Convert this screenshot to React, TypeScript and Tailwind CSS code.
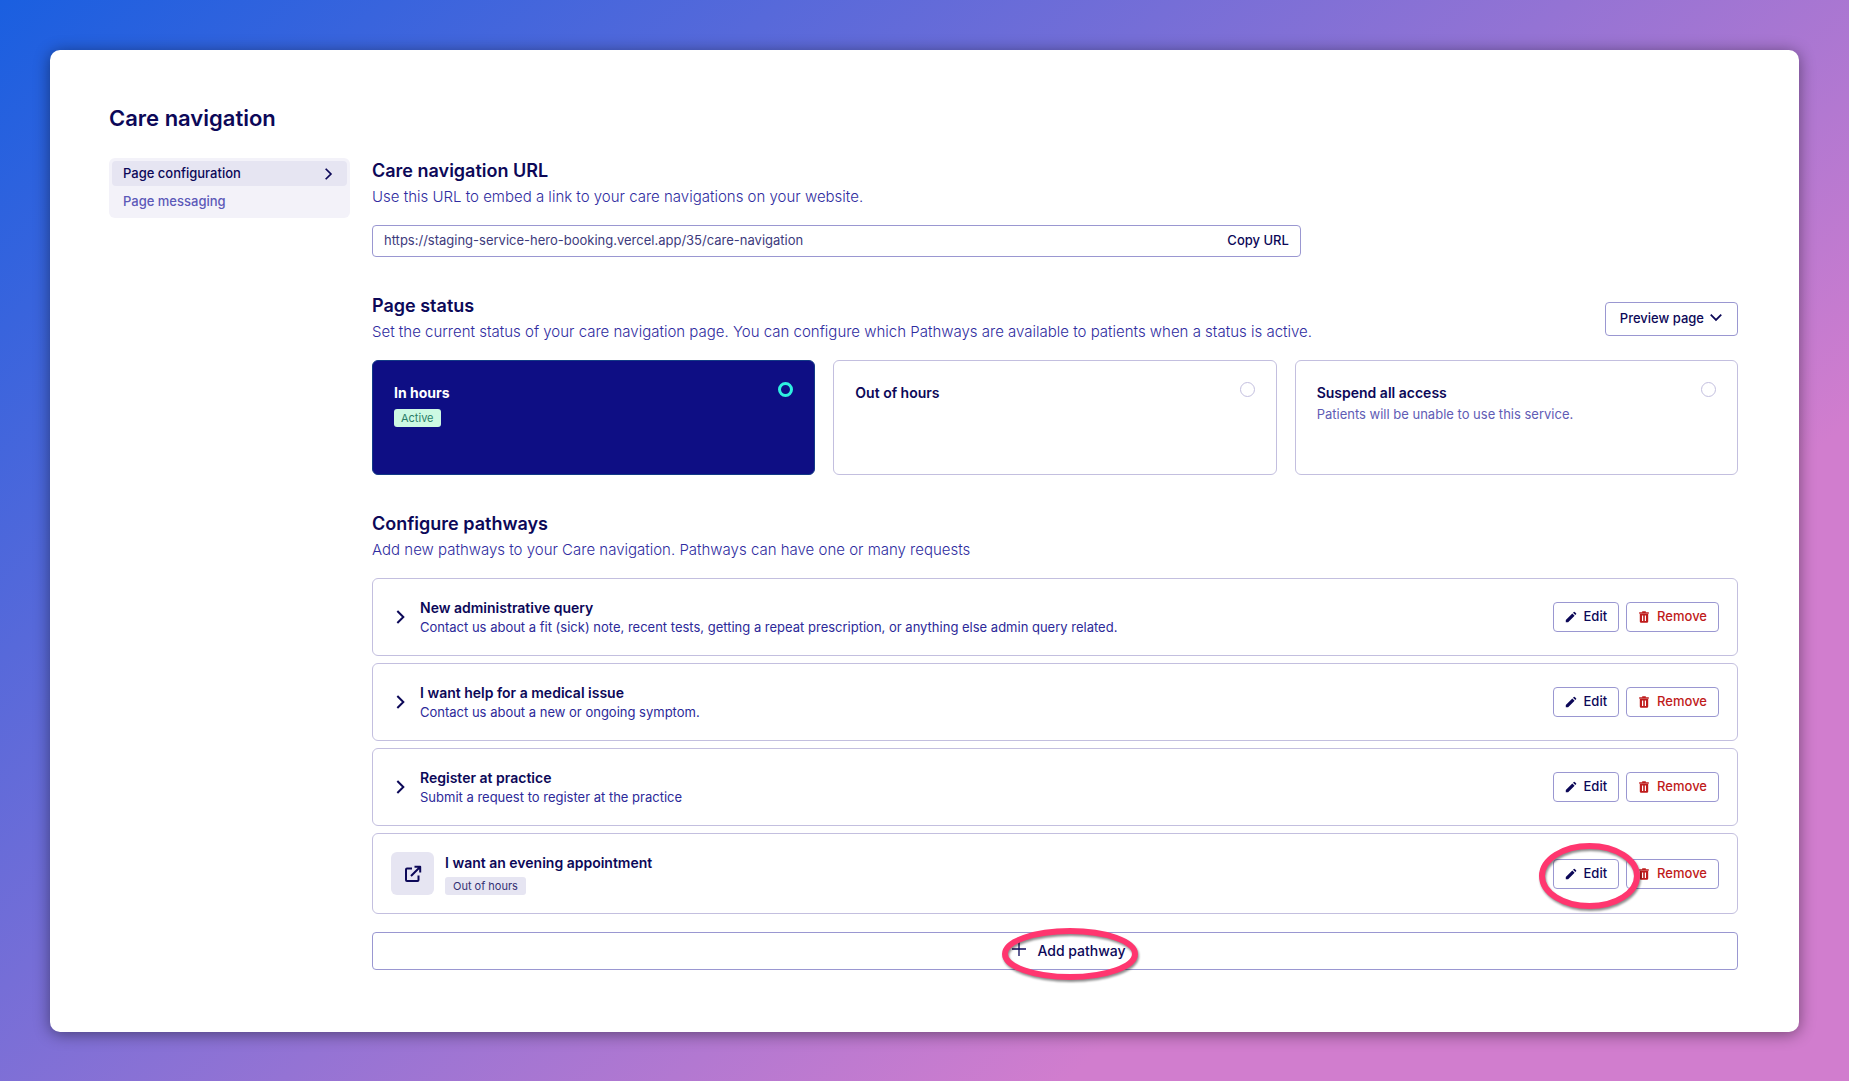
import { useState } from "react";
import type { ReactNode } from "react";
import clsx from "clsx";

type Pathway = {
  title: string;
  description?: string;
  tag?: string;
};

const STATUSES = [
  { key: "in", title: "In hours", note: "" },
  { key: "out", title: "Out of hours", note: "" },
  { key: "suspend", title: "Suspend all access", note: "Patients will be unable to use this service." },
];

const PATHWAYS: Pathway[] = [
  {
    title: "New administrative query",
    description:
      "Contact us about a fit (sick) note, recent tests, getting a repeat prescription, or anything else admin query related.",
  },
  { title: "I want help for a medical issue", description: "Contact us about a new or ongoing symptom." },
  { title: "Register at practice", description: "Submit a request to register at the practice" },
  { title: "I want an evening appointment", tag: "Out of hours" },
];

export default function App() {
  const [status, setStatus] = useState("in");
  const [url, setUrl] = useState("https://staging-service-hero-booking.vercel.app/35/care-navigation");

  return (
    <div className="min-h-screen bg-linear-140/srgb from-[#1a5fe0] via-[#d17dce] via-75% to-[#d17dce] p-[50px] font-['Inter',sans-serif] text-[#0c0858]">
      <div className="rounded-[10px] bg-white pt-[54px] pr-[61px] pb-[62px] pl-[59px] shadow-[0_2px_16px_rgba(0,0,0,0.45)]">
        <h1 className="text-[22px] leading-7 font-semibold">Care navigation</h1>

        <div className="mt-[26px] flex items-start gap-[22px]">
          <nav className="w-[241px] shrink-0 rounded-md bg-[#f3f2f9] p-[3px] text-[13px] leading-[25px] font-medium">
            <a href="#configuration" className="flex items-center justify-between rounded bg-[#e6e5f2] pr-3 pl-[11px]">
              Page configuration
              <Chevron className="h-[14px] w-[14px]" />
            </a>
            <a href="#messaging" className="mt-[3px] block px-[11px] pb-px text-[#5c59b8]">
              Page messaging
            </a>
          </nav>

          <main className="min-w-0 flex-1">
            <section>
              <SectionHeading title="Care navigation URL">
                Use this URL to embed a link to your care navigations on your website.
              </SectionHeading>
              <div className="mt-[15px] flex h-8 w-[68%] items-center rounded border border-[#9a97d1] px-[11px] text-[13px]">
                <input
                  aria-label="Care navigation URL"
                  value={url}
                  onChange={(e) => setUrl(e.target.value)}
                  className="min-w-0 flex-1 text-[#3d3a7c] outline-none"
                />
                <button className="font-medium" onClick={() => navigator.clipboard?.writeText(url)}>
                  Copy URL
                </button>
              </div>
            </section>

            <section className="mt-9">
              <div className="flex items-center justify-between">
                <SectionHeading title="Page status">
                  Set the current status of your care navigation page. You can configure which Pathways are available to
                  patients when a status is active.
                </SectionHeading>
                <button className="flex h-[34px] items-center gap-[5px] rounded border border-[#9a97d1] px-[14px] text-[13px] font-medium">
                  Preview page
                  <Chevron className="mb-1 h-[14px] w-[14px] rotate-90" />
                </button>
              </div>
              <div className="mt-[15px] grid grid-cols-3 gap-[18px]">
                {STATUSES.map((s) => {
                  const active = s.key === status;
                  return (
                    <label
                      key={s.key}
                      className={clsx(
                        "flex h-[115px] items-start justify-between rounded-md border px-[21px] py-[21px]",
                        active ? "border-[#123a86] bg-[#0e0e84] text-white" : "border-[#c3bfdf]"
                      )}
                    >
                      <div>
                        <div className={clsx("text-sm leading-[22px]", active ? "font-bold" : "font-semibold")}>
                          {s.title}
                        </div>
                        {active && (
                          <span className="mt-[5px] block w-fit rounded-[3px] bg-[#cdf9e3] px-[7px] text-[11px] leading-[18px] text-[#2a7d66]">
                            Active
                          </span>
                        )}
                        {s.note && <p className="text-[13px] leading-5 text-[#5f5cb5]">{s.note}</p>}
                      </div>
                      <input
                        type="radio"
                        name="status"
                        checked={active}
                        onChange={() => setStatus(s.key)}
                        className="h-[15px] w-[15px] appearance-none rounded-full border border-[#c3bfdf] checked:border-3 checked:border-[#2ff0e0]"
                      />
                    </label>
                  );
                })}
              </div>
            </section>

            <section className="mt-9">
              <SectionHeading title="Configure pathways">
                Add new pathways to your Care navigation. Pathways can have one or many requests
              </SectionHeading>
              <div className="mt-[15px] flex flex-col gap-[7px]">
                {PATHWAYS.map((p, i) => (
                  <PathwayRow key={p.title} pathway={p} marked={i === PATHWAYS.length - 1} />
                ))}
              </div>
              <button className="mt-[18px] flex h-[38px] w-full items-center justify-center rounded border border-[#9a97d1] pl-7 text-sm font-medium">
                <span className="relative flex items-center gap-[11px]">
                  <svg viewBox="0 0 14 14" className="mb-1 h-[14px] w-[14px]" fill="none" stroke="currentColor" strokeWidth="1.3">
                    <path d="M7 0v14M0 7h14" />
                  </svg>
                  Add pathway
                  <Ring className="-top-4 -left-[13px] h-[58px] w-[142px]" width={142} height={58} />
                </span>
              </button>
            </section>
          </main>
        </div>
      </div>
    </div>
  );
}

function SectionHeading({ title, children }: { title: string; children: ReactNode }) {
  return (
    <div className="pt-px">
      <h2 className="text-lg leading-6 font-semibold">{title}</h2>
      <p className="mt-px text-[15px] leading-[26px] font-light text-[#2f2ca0]">{children}</p>
    </div>
  );
}

function PathwayRow({ pathway, marked }: { pathway: Pathway; marked: boolean }) {
  return (
    <div className="flex items-center rounded-md border border-[#c3bfdf] px-[18px] py-[18px]">
      {pathway.tag ? (
        <span className="mr-[11px] flex h-[43px] w-[43px] items-center justify-center rounded-md bg-[#e6e5f2]">
          <ExternalIcon />
        </span>
      ) : (
        <button aria-label={`Expand ${pathway.title}`} className="mr-[11px] flex w-[18px] justify-center">
          <Chevron className="h-4 w-4" />
        </button>
      )}
      <div className="min-w-0 flex-1">
        <h3 className="text-sm leading-[22px] font-semibold">{pathway.title}</h3>
        {pathway.description && <p className="pb-0.5 text-[13px] leading-4 text-[#2c2999]">{pathway.description}</p>}
        {pathway.tag && (
          <span className="mt-[3px] block w-fit rounded-[3px] bg-[#e6e5f2] px-2 text-[11px] leading-[18px] text-[#343174]">
            {pathway.tag}
          </span>
        )}
      </div>
      <div className="flex gap-[7px] text-[13px] font-medium">
        <button className="relative flex h-[30px] items-center gap-[7px] rounded border border-[#9a97d1] px-[11px]">
          <PencilIcon />
          Edit
          {marked && <Ring className="-top-5 -left-[18px] z-10 h-[72px] w-[107px]" width={107} height={72} />}
        </button>
        <button className="flex h-[30px] items-center gap-[7px] rounded border border-[#9a97d1] px-[11px] text-[#bf1b1b]">
          <TrashIcon />
          Remove
        </button>
      </div>
    </div>
  );
}

// hand-drawn style highlight around a control
function Ring({ className, width, height }: { className: string; width: number; height: number }) {
  return (
    <svg
      viewBox={`0 0 ${width} ${height}`}
      className={clsx("pointer-events-none absolute max-w-none drop-shadow-[1px_2px_1px_rgba(0,0,0,0.45)]", className)}
      fill="none"
    >
      <ellipse cx={width / 2} cy={height / 2} rx={width / 2 - 6} ry={height / 2 - 6} stroke="#ff366f" strokeWidth="6" />
    </svg>
  );
}

function Chevron({ className }: { className: string }) {
  return (
    <svg viewBox="0 0 12 12" className={className} fill="none" stroke="currentColor" strokeWidth="1.5">
      <path d="M4 1.5 8.5 6 4 10.5" />
    </svg>
  );
}

function ExternalIcon() {
  return (
    <svg viewBox="0 0 18 18" className="h-[18px] w-[18px]" fill="none" stroke="currentColor" strokeWidth="2" strokeLinejoin="round">
      <path d="M8 3.5H3a1 1 0 0 0-1 1V15a1 1 0 0 0 1 1h10.500a1 1 0 0 0 1-1v-4.500" />
      <path d="M7 11 15.500 2.500M10.500 1.800h5.700v5.700" />
    </svg>
  );
}

function PencilIcon() {
  return (
    <svg viewBox="0 0 12 12" className="h-3 w-3" fill="currentColor">
      <path d="M.8 11.200V8.900L7.300 2.400l2.300 2.300-6.500 6.500zM8 1.700l.8-.8q.4-.4.9 0l1.400 1.400q.4.5 0 .9l-.8.800z" />
    </svg>
  );
}

function TrashIcon() {
  return (
    <svg viewBox="0 0 12 12" className="h-3 w-3" fill="currentColor" fillRule="evenodd">
      <path d="M4.200.3h3.600v.9h3v1.500H1.200V1.200h3zM1.800 3.100h8.400v7.400q0 1.300-1.300 1.300H3.100q-1.300 0-1.300-1.300zM4 4.500v5.500h1.200V4.500zm2.800 0v5.500H8V4.500z" />
    </svg>
  );
}
